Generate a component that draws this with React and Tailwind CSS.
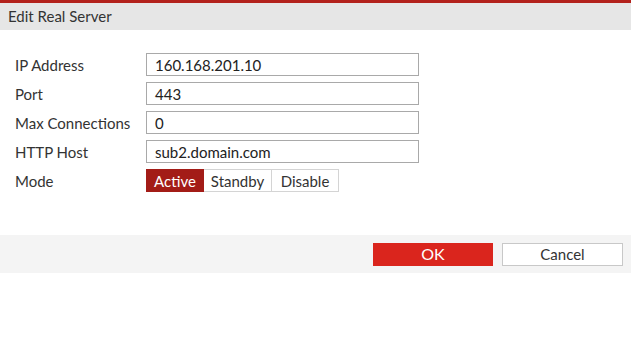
const fields = [
  { label: "IP Address", value: "160.168.201.10" },
  { label: "Port", value: "443" },
  { label: "Max Connections", value: "0" },
  { label: "HTTP Host", value: "sub2.domain.com" },
];

export default function App() {
  return (
    <div className="w-[631px] h-[351px] bg-white text-[#333] font-['Lato','Noto_Sans',sans-serif] text-[15px]">
      <div className="border-t-[3px] border-[#b3221c] bg-[#e6e6e6] h-[30px] flex items-center px-2 text-[15px] text-[#333]">
        Edit Real Server
      </div>

      <div className="pt-[23px] pl-[15px] flex flex-col gap-[6px]">
        {fields.map((f) => (
          <div key={f.label} className="flex items-center h-[23px]">
            <span className="w-[131px] pt-[2px]">{f.label}</span>
            <div className="w-[273px] h-[23px] border border-[#a9a9a9] flex items-center pl-[8px] pt-[1px] text-[#222]">
              {f.value}
            </div>
          </div>
        ))}
        <div className="flex items-center h-[23px]">
          <span className="w-[131px] pt-[2px]">Mode</span>
          <div className="flex h-[23px]">
            <div className="w-[58px] bg-[#a31c17] text-white flex items-center justify-center pt-[1px]">Active</div>
            <div className="w-[68px] border border-[#d4d4d4] border-l-0 flex items-center justify-center pt-[1px]">Standby</div>
            <div className="w-[67px] border border-[#d4d4d4] border-l-0 flex items-center justify-center pt-[1px]">Disable</div>
          </div>
        </div>
      </div>

      <div className="mt-[43px] h-[38px] bg-[#f4f4f4] flex items-center justify-end gap-[9px] pr-[8px]">
        <button className="w-[120px] h-[23px] bg-[#da251d] text-white text-[16px] flex items-center justify-center">
          OK
        </button>
        <button className="w-[121px] h-[23px] bg-white border border-[#c8c8c8] text-[#333] flex items-center justify-center">
          Cancel
        </button>
      </div>
    </div>
  );
}
